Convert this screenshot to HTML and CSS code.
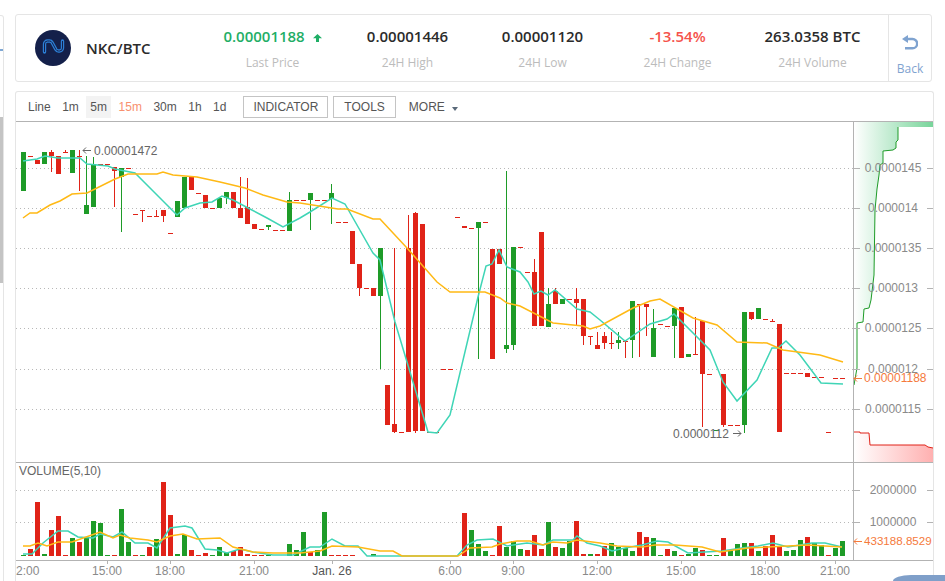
FILE: index.html
```html
<!DOCTYPE html>
<html lang="en">
<head>
    <meta charset="UTF-8">
    <meta name="viewport" content="width=device-width, initial-scale=1.0">
    <title>NKC/BTC - Kline</title>
    <link rel="stylesheet" href="styles.css">
</head>
<body>

    <div class="side-card">
        <div class="side-active"></div>
        <div class="side-scroll"></div>
    </div>

    <div class="main">
        <div class="ticker">
            <div class="pair">
                <svg class="pair-logo" viewBox="0 0 36 36">
                    <circle cx="18" cy="18" r="18" fill="#14204a"/>
                    <path d="M9.500 22V14a3 3 0 0 1 3-3h2a3 3 0 0 1 2.600 1.500l3.800 7a3 3 0 0 0 2.600 1.500h1a3 3 0 0 0 3-3V11" fill="none" stroke="#2c7fd6" stroke-width="3.400" stroke-linecap="round"/>
                    <path d="M9.500 22V14a3 3 0 0 1 3-3h2a3 3 0 0 1 2.600 1.500l3.800 7a3 3 0 0 0 2.600 1.500h1a3 3 0 0 0 3-3V11" fill="none" stroke="#14204a" stroke-width="1"/>
                </svg>
                <span class="pair-name">NKC/BTC</span>
            </div>
            <div class="stats">
                <div class="stat">
                    <div class="stat-value up">0.00001188
                        <svg class="up-arrow" viewBox="0 0 9 8"><path d="M4.500 0 9 4.300H6V8H3V4.300H0z" fill="#1fae66"/></svg>
                    </div>
                    <div class="stat-label">Last Price</div>
                </div>
                <div class="stat">
                    <div class="stat-value">0.00001446</div>
                    <div class="stat-label">24H High</div>
                </div>
                <div class="stat">
                    <div class="stat-value">0.00001120</div>
                    <div class="stat-label">24H Low</div>
                </div>
                <div class="stat">
                    <div class="stat-value down">-13.54%</div>
                    <div class="stat-label">24H Change</div>
                </div>
                <div class="stat">
                    <div class="stat-value">263.0358 BTC</div>
                    <div class="stat-label">24H Volume</div>
                </div>
            </div>
            <div class="back">
                <svg class="back-icon" viewBox="0 0 16 15">
                    <path d="M6 0 0 4l6 4z" fill="#7fa3d0"/>
                    <path d="M4 4h6.500a4.600 4.600 0 0 1 0 9.300H3" fill="none" stroke="#7fa3d0" stroke-width="2.400"/>
                </svg>
                <span>Back</span>
            </div>
        </div>

        <div class="chart-card">
            <div class="toolbar">
                <span class="period">Line</span>
                <span class="period">1m</span>
                <span class="period period-active">5m</span>
                <span class="period period-hot">15m</span>
                <span class="period">30m</span>
                <span class="period">1h</span>
                <span class="period">1d</span>
                <span class="tool-btn tool-first">INDICATOR</span>
                <span class="tool-btn tool-second">TOOLS</span>
                <span class="more">MORE<i class="caret"></i></span>
            </div>
            <svg id="chart" class="chart" viewBox="16 121 917 460"></svg>
        </div>
    </div>

    <div class="float-tab"></div>

    <script src="chart.js"></script>
</body>
</html>
```

FILE: styles.css
```css
html, body {
    height: 100%;
}

body {
    font-family: "Liberation Sans", Arial, sans-serif;
    background-color: #fff;
    color: #333;
    margin: 0;
    padding: 0;
    display: flex;
    overflow: hidden;
}

.side-card {
    width: 3px;
    height: 100%;
    margin-top: 15px;
    border: 1px solid #e5e5e5;
    border-left: none;
    border-radius: 0 3px 0 0;
    flex-shrink: 0;
}

.side-active {
    height: 2px;
    margin-top: 33px;
    background-color: #7fa8d4;
}

.side-scroll {
    height: 166px;
    margin-top: 66px;
    background-color: #c4c4c4;
}

.main {
    width: 918px;
    margin-left: 11px;
    padding-top: 14px;
    flex-shrink: 0;
}

.ticker {
    display: flex;
    align-items: stretch;
    height: 66px;
    width: 915px;
    border: 1px solid #e5e5e5;
    border-radius: 3px;
}

.pair {
    display: flex;
    align-items: center;
    gap: 15px;
    padding-left: 19px;
    width: 170px;
}

.pair-logo {
    width: 36px;
    height: 36px;
}

.pair-name {
    font-family: "Open Sans", sans-serif;
    font-size: 15px;
    font-weight: 600;
    color: #2b2b2b;
}

.stats {
    display: flex;
}

.stat {
    width: 135px;
    text-align: center;
}

.stat-value {
    font-family: "Open Sans", sans-serif;
    font-size: 15px;
    font-weight: 600;
    line-height: 20px;
    margin-top: 11px;
    color: #2b2b2b;
}

.stat-value.up {
    color: #1fae66;
}

.stat-value.down {
    color: #f5524b;
}

.up-arrow {
    width: 9px;
    height: 8px;
    margin-left: 4px;
}

.stat-label {
    font-family: "Open Sans", sans-serif;
    font-size: 12px;
    line-height: 16px;
    margin-top: 9px;
    color: #bcbcbc;
}

.back {
    width: 42px;
    margin-left: auto;
    border-left: 1px solid #e5e5e5;
    display: flex;
    flex-direction: column;
    align-items: center;
    font-family: "Open Sans", sans-serif;
    font-size: 12px;
    color: #7fa3d0;
}

.back-icon {
    width: 16px;
    height: 15px;
    margin-top: 20px;
    margin-bottom: 10px;
}

.chart-card {
    margin-top: 9px;
    width: 917px;
    height: 490px;
    border: 1px solid #e5e5e5;
    border-bottom: none;
    border-radius: 3px 3px 0 0;
}

.toolbar {
    display: flex;
    align-items: center;
    gap: 3.5px;
    height: 29px;
    padding-left: 8px;
    font-size: 12px;
    color: #555;
}

.period {
    padding: 0 4px;
    line-height: 22px;
}

.period-active {
    background-color: #f3f3f3;
}

.period-hot {
    color: #f8906f;
}

.tool-btn {
    padding: 0 9px;
    line-height: 20px;
    border: 1px solid #c4c4c4;
}

.tool-first {
    margin-left: 9.5px;
}

.tool-second {
    margin-left: 1.5px;
    padding: 0 10px;
}

.more {
    margin-left: 9.5px;
}

.caret {
    display: inline-block;
    margin-left: 7px;
    border-left: 3px solid transparent;
    border-right: 3px solid transparent;
    border-top: 4px solid #5a6a7a;
}

.chart {
    display: block;
    width: 917px;
    height: 460px;
}

.chart text {
    font-size: 12px;
}

.chart text.label-tight {
    font-size: 11.6px;
}

.float-tab {
    position: absolute;
    left: 893px;
    top: 575px;
    width: 52px;
    height: 6px;
    background-color: #7f9fc9;
    border-radius: 18px 0 0 0 / 6px 0 0 0;
}
```

FILE: chart.js
```js
// one candle per 7px, starting at x = 21
// [color, bodyTop, bodyBottom, wickTop, wickBottom]
const candles = [
    ['g',152,191],['r',156,157],['r',160,164],['g',152,164],['r',152,156,150,172],['r',156,174],
    ['r',152,153,150],['g',150,173],['r',156,157,150,191],['g',205,214,156],['g',164,207,157],['r',164,165],
    ['r',164,165],['r',167,171,167,207],['g',168,177,168,232],['r',168,169],['r',214,215],['r',210,211,210,222],
    ['r',216,217],['r',216,217,210],['r',210,216,210,222],['r',233,234],['g',201,217],['g',177,208],
    ['r',177,190],['r',193,194],['r',195,208],['r',208,209],['g',198,208],['g',192,198,192,204],
    ['r',192,208],['r',208,218,177],['r',207,224,178],['r',224,229],['r',229,230],['g',225,227,225,230],
    ['r',230,231],['r',230,231],['g',200,231,192],['r',200,201],['r',200,201],['g',193,200,193,230],
    ['r',200,201],['r',200,201],['g',193,199,184,224],['r',222,223],['r',222,223],['r',231,264],
    ['r',264,288,264,296],['r',288,289],['r',288,296],['g',248,296,248,369],['r',385,425],['r',424,432,248,433],
    ['r',432,433],['r',248,432,215],['r',213,431,212,433],['r',224,431],['r',432,433],['r',432,433],
    ['r',369,370],['r',369,370],['r',217,218],['r',226,228],['r',228,229],['g',222,228,222,359],
    ['r',222,223],['r',249,359],['r',249,264],['g',345,349,171,353],['g',247,345,247,350],['r',247,248],
    ['r',272,273],['r',272,326,259],['r',232,326],['g',304,327,288],['r',291,304,288],['g',299,304],
    ['r',299,300],['r',299,303,288,325],['r',299,336,299,345],['r',336,337,336,345],['r',345,349,332],['r',336,343,332,349],
    ['r',343,344,332,349],['g',340,343,332,349],['r',341,342,341,358],['g',301,340,301,358],['r',304,305,304,357],['r',304,307,304,336],
    ['g',328,357,309],['r',324,325],['r',326,327],['g',308,326,308,358],['r',307,358],['g',354,357],
    ['r',354,355,317],['r',321,374,321,427],['r',374,375],['g',430,431],['r',374,425,374,427],['r',425,426],
    ['r',425,426],['g',312,425,312,433],['r',312,319,312,320],['g',308,319],['r',319,320],['r',321,322,319],
    ['r',324,432],['r',373,374],['r',373,374],['r',373,374],['r',373,377],['r',377,378],
    ['r',377,378],['r',432,433],['r',378,379],['r',378,379]
];

// volume bars, [color, top], bottom is y = 556. null = no bar
const volumes = [
    ['g',555],['r',549],['r',502],['g',554],['r',530],['r',516],['r',555],['g',538],['r',542],['g',538],
    ['g',521],['g',523],['g',555],['r',555],['g',509],['g',542],['r',555],['g',555],['r',547],['g',539],
    ['r',482],['r',515],['g',554],['g',535],['r',550],['r',555],['r',553],['g',555],['g',547],['g',553],
    ['r',551],['r',547],['r',554],['r',555],['r',555],['g',555],null,null,['g',544],['g',550],
    ['g',532],['r',552],['g',550],['g',512],['r',555],['r',555],['r',555],['r',555],null,null,
    ['g',554],null,null,null,null,null,null,null,null,null,
    null,null,null,['r',513],['g',530],['g',544],['g',551],['r',555],['r',526],['g',547],
    ['g',541],['g',549],['r',550],['r',535],['r',549],['g',522],['r',547],['g',548],['g',541],['r',521],
    ['r',554],['g',554],['r',554],['r',546],['g',543],['g',547],['g',548],['g',551],['r',532],['r',537],
    ['g',538],['g',555],['r',549],['g',551],['r',555],['g',554],['g',548],['r',550],['g',555],['g',555],
    ['r',538],['g',551],['g',544],['g',543],['r',543],['g',551],['r',546],['r',535],['r',547],['g',551],
    ['g',550],['g',540],['r',537],['g',543],['g',545],['r',555],['g',548],['g',541]
];

const priceMa = {
    '#3fd5b6': [[23,161],[37,159],[45,156],[58,158],[80,158],[87,164],[108,166],[115,169],[135,173],[163,201],[177,215],[185,208],[200,203],[212,202],[222,196],[233,200],[250,209],[267,218],[283,227],[300,218],[310,212],[332,198],[345,204],[373,253],[380,260],[395,322],[428,432],[437,433],[450,415],[478,297],[486,266],[492,264],[499,250],[507,267],[520,272],[528,282],[534,294],[541,291],[548,295],[555,290],[577,309],[590,312],[600,320],[625,341],[650,324],[667,319],[674,314],[710,350],[723,382],[737,401],[757,380],[772,348],[778,348],[786,341],[800,355],[821,383],[843,384]],
    '#ffb915': [[23,218],[30,213],[37,213],[50,205],[60,201],[72,194],[87,193],[115,179],[128,174],[157,174],[163,172],[173,175],[197,177],[220,182],[245,188],[263,195],[287,202],[300,203],[338,209],[347,209],[373,219],[380,219],[407,248],[437,282],[450,292],[485,292],[500,298],[507,303],[520,306],[553,323],[583,326],[590,329],[600,326],[633,308],[650,301],[660,299],[693,318],[717,325],[737,342],[767,343],[783,350],[820,355],[843,362]]
};

const volumeMa = {
    '#3fd5b6': [[23,554],[32,554],[43,543],[58,531],[68,531],[78,537],[93,538],[100,534],[113,537],[122,532],[135,543],[148,543],[157,548],[170,528],[185,526],[192,528],[205,549],[217,550],[227,553],[240,549],[253,552],[273,555],[293,555],[310,547],[320,547],[332,539],[345,546],[358,546],[367,556],[400,556],[457,556],[467,545],[477,540],[493,539],[507,546],[527,543],[543,545],[553,540],[573,540],[577,536],[587,543],[600,546],[612,551],[625,548],[642,545],[657,541],[668,542],[688,553],[722,551],[742,548],[758,546],[773,543],[788,547],[812,543],[825,543],[842,547]],
    '#ffb915': [[23,546],[30,546],[38,543],[47,546],[58,542],[72,542],[100,532],[113,538],[120,535],[130,538],[148,540],[157,542],[170,536],[183,534],[197,539],[220,538],[233,547],[253,552],[273,553],[300,553],[320,551],[332,546],[358,547],[380,551],[393,551],[402,556],[458,556],[470,548],[492,547],[500,544],[517,541],[530,541],[543,545],[553,542],[567,543],[577,540],[600,543],[617,546],[642,547],[655,545],[675,545],[702,547],[720,552],[748,548],[788,546],[808,545],[842,547]]
};

const priceLabels = [[168,'0.0000145'],[208,'0.000014'],[248,'0.0000135'],[288,'0.000013'],[328,'0.0000125'],[369,'0.000012'],[409,'0.0000115']];
const volumeLabels = [[490,'2000000'],[522,'1000000']];
const timeLabels = [[107,'15:00'],[170,'18:00'],[254,'21:00'],[332,'Jan. 26'],[450,'6:00'],[513,'9:00'],[597,'12:00'],[681,'15:00'],[765,'18:00'],[835,'21:00']];

const askCurve = '898,127 898,140 896,142 896,148 893,150 883,151 883,163 880,165 879,175 877,189 875,210 874,275 871,300 869,308 864,309 863,322 857,323 857,368 854,385';
const bidCurve = '854,432 860,432 860,433 869,433 870,445 925,445 928,447 933,448';

const GREEN = '#1e9b28';
const RED = '#e02318';
const AXIS = '#b3b3b3';
const ORANGE = '#f57a3c';

let out = `<defs>
    <linearGradient id="askFill"><stop offset="0" stop-color="#fff"/><stop offset="1" stop-color="#78d49a"/></linearGradient>
    <linearGradient id="bidFill"><stop offset="0" stop-color="#fff"/><stop offset="1" stop-color="#ffb0b0"/></linearGradient>
</defs>`;

function gridLine(y) {
    out += `<line x1="16" x2="853" y1="${y + 0.5}" y2="${y + 0.5}" stroke="#b8b8b8" stroke-dasharray="1 3"/>`;
}

function axisTick(y) {
    out += `<path d="M853 ${y + 0.5}h7M927 ${y + 0.5}h6" stroke="${AXIS}"/>`;
}

function label(x, y, text, color, anchor, cls) {
    out += `<text x="${x}" y="${y}" fill="${color}" text-anchor="${anchor || 'middle'}" class="${cls || ''}">${text}</text>`;
}

// small pointer next to a marker label, dir -1 points left, 1 points right
function pointer(x, y, dir, color) {
    const tip = dir < 0 ? x : x + 8;
    out += `<path d="M${x} ${y}h8M${tip - dir * 3} ${y - 3}L${tip} ${y}L${tip - dir * 3} ${y + 3}" fill="none" stroke="${color}"/>`;
}

priceLabels.forEach(([y]) => gridLine(y));
volumeLabels.forEach(([y]) => gridLine(y));

// depth areas
out += `<polygon points="854,122 933,122 933,127 ${askCurve}" fill="url(#askFill)"/>`;
out += `<polyline points="${askCurve}" fill="none" stroke="${GREEN}"/>`;
out += `<polygon points="${bidCurve} 933,462 854,462" fill="url(#bidFill)"/>`;
out += `<polyline points="${bidCurve}" fill="none" stroke="${RED}"/>`;

candles.forEach((c, i) => {
    const x = 21 + 7 * i;
    const color = c[0] === 'g' ? GREEN : RED;
    if (c.length > 3) {
        const top = c[3];
        const bottom = c[4] || c[2];
        out += `<rect x="${x + 2}" y="${top}" width="1" height="${bottom - top}" fill="${color}"/>`;
    }
    out += `<rect x="${x}" y="${c[1]}" width="5" height="${c[2] - c[1]}" fill="${color}"/>`;
});

volumes.forEach((v, i) => {
    if (!v) return;
    const color = v[0] === 'g' ? GREEN : RED;
    out += `<rect x="${21 + 7 * i}" y="${v[1]}" width="5" height="${556 - v[1]}" fill="${color}"/>`;
});

[priceMa, volumeMa].forEach(group => {
    Object.keys(group).forEach(color => {
        const pts = group[color].map(p => p.join(',')).join(' ');
        out += `<polyline points="${pts}" fill="none" stroke="${color}" stroke-width="1.500"/>`;
    });
});

// frame lines
out += `<path d="M16 121.500H933M16 462.500H933M16 560.500H933M853.500 122V560" stroke="${AXIS}" fill="none"/>`;

priceLabels.forEach(([y, t]) => {
    axisTick(y);
    label(893, y + 4, t, '#8a8a8a');
});
volumeLabels.forEach(([y, t]) => {
    axisTick(y);
    label(893, y + 4, t, '#8a8a8a');
});

timeLabels.forEach(([x, t]) => {
    out += `<path d="M${x + 0.5} 560v4" stroke="${AXIS}"/>`;
    label(x, 575, t, t === 'Jan. 26' ? '#555' : '#8a8a8a');
});
label(16, 575, '2:00', '#8a8a8a', 'start');

label(19, 475, 'VOLUME(5,10)', '#666', 'start');

pointer(83, 150.5, -1, '#666');
label(94, 155, '0.00001472', '#666', 'start');
label(673, 438, '0.0000112', '#666', 'start');
pointer(733, 433.5, 1, '#666');

pointer(854, 378.5, -1, ORANGE);
label(864, 382, '0.00001188', ORANGE, 'start');
pointer(854, 541.5, -1, ORANGE);
label(864, 545, '433188.8529', ORANGE, 'start', 'label-tight');

document.getElementById('chart').innerHTML = out;
```
